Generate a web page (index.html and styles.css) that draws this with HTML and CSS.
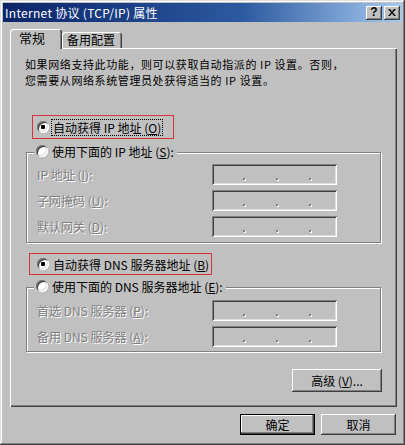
FILE: index.html
```html
<!DOCTYPE html>
<html lang="zh-CN">
<head>
<meta charset="utf-8">
<title>Internet 协议 (TCP/IP) 属性</title>
<link rel="stylesheet" href="styles.css">
</head>
<body>
<div class="window">
  <div class="titlebar">
    <span class="title">Internet 协议 (TCP/IP) 属性</span>
    <div class="title-btns">
      <span class="tbtn help">?</span>
      <span class="tbtn close"><svg width="8" height="7" viewBox="0 0 8 7"><path d="M0 0h2l2 2.5L6 0h2L5 3.5 8 7H6L4 4.5 2 7H0l3-3.5z" fill="#000"/></svg></span>
    </div>
  </div>
  <div class="body">
    <div class="tabs">
      <div class="tab active">常规</div>
      <div class="tab">备用配置</div>
    </div>
    <div class="panel">
      <p class="intro"><span class="line">如果网络支持此功能，则可以获取自动指派的 IP 设置。否则，</span><span class="line">您需要从网络系统管理员处获得适当的 IP 设置。</span></p>

      <div class="option hl hl1"><span class="radio checked"></span><span class="focus">自动获得 IP 地址 (<u>O</u>)</span></div>

      <div class="group g1">
        <div class="legend"><span class="radio"></span><span>使用下面的 IP 地址 (<u>S</u>):</span></div>
        <div class="fields">
          <span class="label">IP 地址 (<u>I</u>):</span>
          <div class="ipbox"><i class="dot"></i><i class="dot"></i><i class="dot"></i></div>
          <span class="label">子网掩码 (<u>U</u>):</span>
          <div class="ipbox"><i class="dot"></i><i class="dot"></i><i class="dot"></i></div>
          <span class="label">默认网关 (<u>D</u>):</span>
          <div class="ipbox"><i class="dot"></i><i class="dot"></i><i class="dot"></i></div>
        </div>
      </div>

      <div class="option hl hl2"><span class="radio checked"></span><span class="otext">自动获得 DNS 服务器地址 (<u>B</u>)</span></div>

      <div class="group g2">
        <div class="legend"><span class="radio"></span><span>使用下面的 DNS 服务器地址 (<u>E</u>):</span></div>
        <div class="fields">
          <span class="label">首选 DNS 服务器 (<u>P</u>):</span>
          <div class="ipbox"><i class="dot"></i><i class="dot"></i><i class="dot"></i></div>
          <span class="label">备用 DNS 服务器 (<u>A</u>):</span>
          <div class="ipbox"><i class="dot"></i><i class="dot"></i><i class="dot"></i></div>
        </div>
      </div>

      <div class="adv-row"><button class="btn adv">高级 (<u>V</u>)...</button></div>
    </div>
    <div class="footer">
      <button class="btn default">确定</button>
      <button class="btn">取消</button>
    </div>
  </div>
</div>
</body>
</html>
```

FILE: styles.css
```css
* { box-sizing: border-box; }

html, body {
  margin: 0;
  padding: 0;
  background: #c0c0c0;
}

body {
  font-family: "Noto Sans CJK SC", "Noto Sans", sans-serif;
  font-size: 12px;
  color: #000;
}

.window {
  width: 405px;
  height: 445px;
  padding: 3px;
  background: #c0c0c0;
  box-shadow: inset -1px -1px #404040, inset 1px 1px #dfdfdf, inset -2px -2px #808080, inset 2px 2px #fff;
}

.titlebar {
  height: 19px;
  display: flex;
  align-items: center;
  justify-content: space-between;
  padding: 0 2px 0 2px;
  background: linear-gradient(90deg, #0a246a 0%, #2c5aa0 60%, #a6caf0 100%);
}

.title {
  color: #fff;
  font-size: 12px;
  line-height: 19px;
  white-space: nowrap;
  letter-spacing: 0.3px;
}

.title-btns {
  display: flex;
  gap: 2px;
}

.tbtn {
  width: 16px;
  height: 14px;
  display: flex;
  align-items: center;
  justify-content: center;
  background: #c0c0c0;
  box-shadow: inset -1px -1px #404040, inset 1px 1px #fff, inset -2px -2px #808080;
}

.help {
  font-family: "Liberation Sans", sans-serif;
  font-weight: bold;
  font-size: 12px;
  line-height: 14px;
  padding-bottom: 1px;
}

.body {
  padding: 7px 5px 0 7px;
}

.tabs {
  display: flex;
  align-items: flex-end;
  height: 19px;
}

.tab {
  height: 16px;
  line-height: 16px;
  padding: 0 6px 0 5px;
  width: 60px;
  border-radius: 3px 3px 0 0;
  background: #c0c0c0;
  box-shadow: inset 1px 1px #fff, inset -1px 0 #404040, inset -2px 0 #808080;
  white-space: nowrap;
}

.tab.active {
  position: relative;
  z-index: 1;
  width: 52px;
  height: 20px;
  line-height: 18px;
  margin-bottom: -1px;
  padding-left: 9px;
  font-size: 13px;
}

.panel {
  position: relative;
  height: 359px;
  background: #c0c0c0;
  box-shadow: inset 1px 1px #fff, inset -1px -1px #404040, inset -2px -2px #808080;
  padding-top: 1px;
}

.intro {
  margin: 7px 0 0 15px;
  white-space: nowrap;
  font-size: 11px;
  letter-spacing: 0.6px;
}

.line {
  display: block;
  height: 16px;
  line-height: 16px;
}

.option {
  display: flex;
  align-items: center;
  white-space: nowrap;
}

.hl {
  border: 1px solid #d8323c;
}

.hl1 {
  margin: 27px 0 0 22px;
  width: 142px;
  height: 24px;
  padding-left: 4px;
  gap: 2px;
}

.hl2 {
  margin: 10px 0 0 19px;
  width: 183px;
  height: 22px;
  padding-left: 7px;
  gap: 4px;
}

.focus {
  border: 1px dotted #000;
  padding: 0 1px;
  line-height: 15px;
}

.radio {
  flex: none;
  width: 12px;
  height: 12px;
  border-radius: 50%;
  background: #fff;
  display: flex;
  align-items: center;
  justify-content: center;
  box-shadow: inset 1px 1px #808080, inset -1px -1px #fff, inset 2px 2px #404040, inset -2px -2px #dfdfdf;
}

.radio.checked::after {
  content: "";
  width: 4px;
  height: 4px;
  border-radius: 1px;
  background: #000;
}

.group {
  margin: 12px 16px 0 16px;
  border: 1px solid #808080;
  box-shadow: inset 1px 1px #fff, 1px 1px #fff;
}

.g1 { margin-top: 13px; padding-bottom: 5px; }
.g2 { margin-top: 12px; padding-bottom: 4px; }

.legend {
  display: flex;
  align-items: center;
  gap: 4px;
  width: fit-content;
  height: 16px;
  margin: -10px 0 0 7px;
  padding: 0 3px 0 2px;
  background: #c0c0c0;
  white-space: nowrap;
}

.fields {
  display: grid;
  grid-template-columns: 175px 125px;
  row-gap: 5px;
  align-items: center;
  margin-top: 5px;
  padding-left: 10px;
}

.g2 .fields { margin-top: 6px; }

.label {
  color: #808080;
  text-shadow: 1px 1px #fff;
  white-space: nowrap;
}

.ipbox {
  height: 21px;
  display: flex;
  align-items: flex-start;
  gap: 31px;
  padding: 14px 0 0 31px;
  background: #c0c0c0;
  box-shadow: inset 1px 1px #808080, inset -1px -1px #fff, inset 2px 2px #404040, inset -2px -2px #dfdfdf;
}

.dot {
  display: block;
  width: 2px;
  height: 2px;
  background: #808080;
  box-shadow: 1px 1px #fff;
}

.adv-row {
  display: flex;
  justify-content: flex-end;
  margin-top: 17px;
  padding-right: 15px;
}

.btn {
  font: inherit;
  color: #000;
  border: 0;
  padding: 0;
  margin: 0;
  background: #c0c0c0;
  height: 21px;
  width: 75px;
  box-shadow: inset -1px -1px #404040, inset 1px 1px #fff, inset -2px -2px #808080;
  white-space: nowrap;
}

.btn.adv {
  width: 90px;
  height: 23px;
}

.btn.default {
  box-shadow: inset 0 0 0 1px #000, inset -2px -2px #404040, inset -3px -3px #808080, inset 2px 2px #fff;
}

.footer {
  display: flex;
  justify-content: flex-end;
  gap: 6px;
  margin-top: 7px;
  padding-right: 1px;
}
```
